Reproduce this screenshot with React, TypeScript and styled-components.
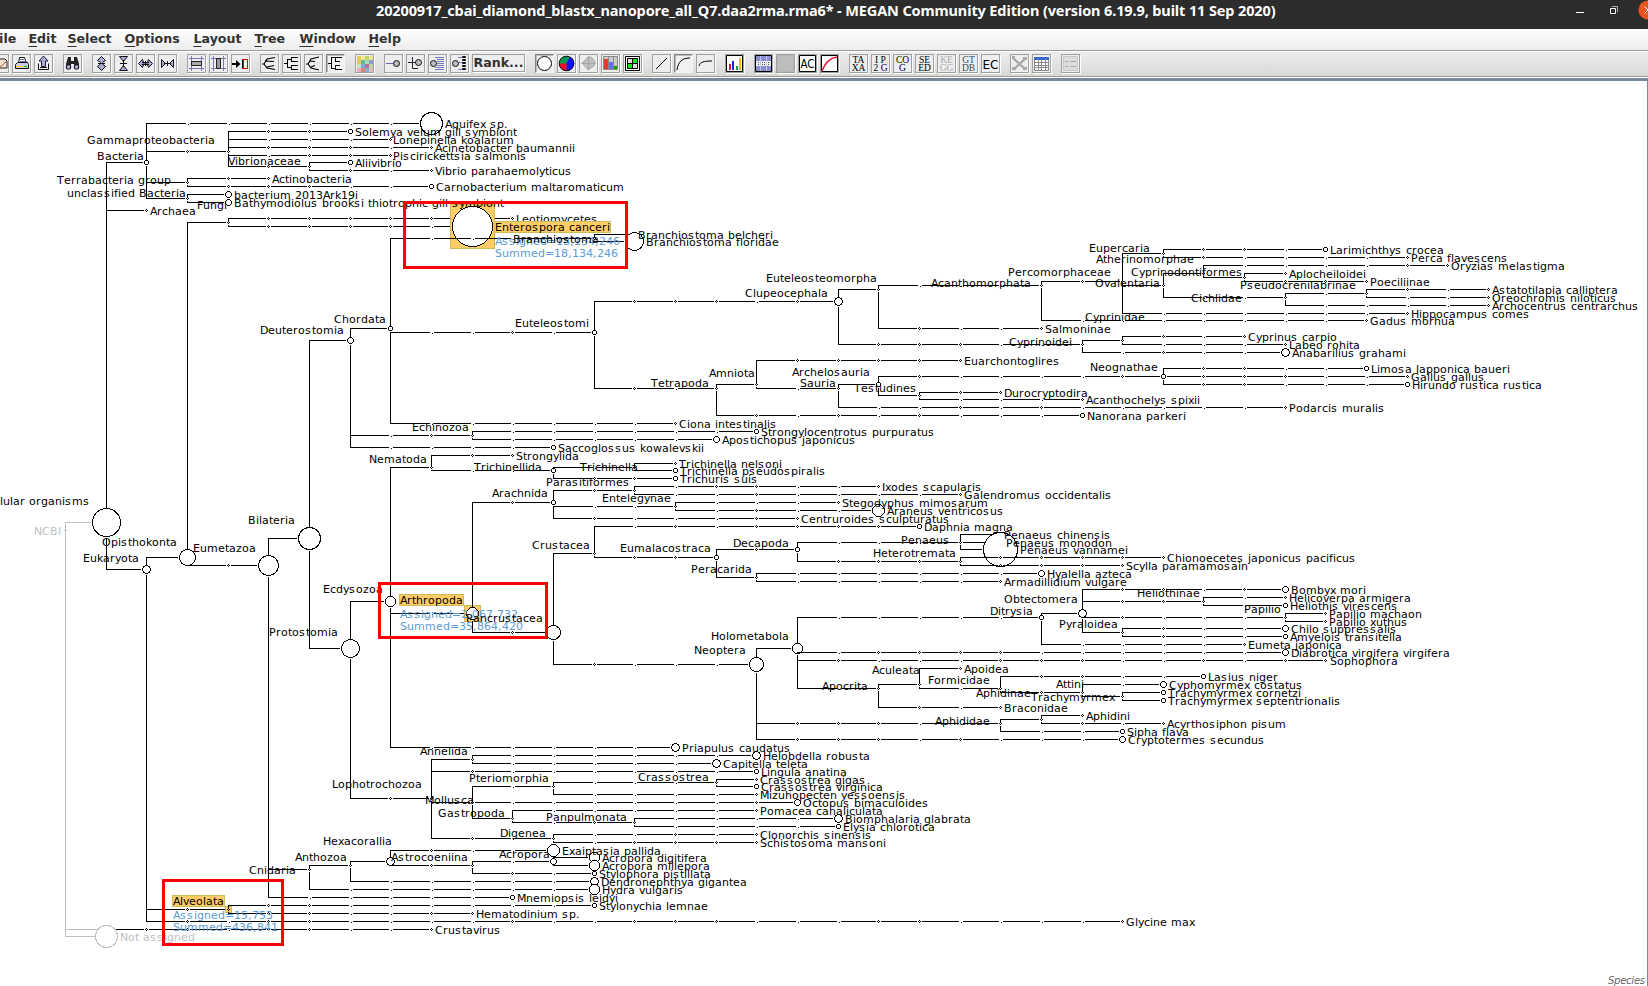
import React from "react";
import styled, { createGlobalStyle, css } from "styled-components";

const Global = createGlobalStyle`
  html, body, #root { margin: 0; height: 100%; background: #fff; }
  body { overflow: hidden; font-family: "DejaVu Sans", sans-serif; }
`;

const Window = styled.div`
  width: 1648px;
  height: 986px;
  display: flex;
  flex-direction: column;
  overflow: hidden;
  background: #fff;
`;
const TitleBar = styled.header`
  flex: none;
  height: 29px;
  display: flex;
  align-items: flex-start;
  background: #2c2c2c;
  overflow: hidden;
`;
const Title = styled.h1`
  margin: 0 0 0 376px;
  width: 1190px;
  font: 700 14.5px/21px "Noto Sans", sans-serif;
  letter-spacing: -0.12px;
  color: #fff;
  white-space: nowrap;
`;
const WindowControls = styled.svg`
  flex: none;
  display: block;
`;
const MenuBar = styled.nav`
  flex: none;
  height: 21px;
  display: flex;
  align-items: flex-start;
  gap: 13px;
  background: linear-gradient(#fff, #ececec);
  border-bottom: 1px solid #9a9a9a;
`;
const MenuItem = styled.span<{ $w: number; $shift?: number }>`
  flex: none;
  width: ${(p) => p.$w}px;
  margin-left: ${(p) => p.$shift ?? 0}px;
  font: 700 12.6px/19px "DejaVu Sans", sans-serif;
  color: #333;
  white-space: nowrap;
  u { text-underline-offset: 3px; text-decoration-thickness: 1px; text-decoration-skip-ink: none; }
`;
const ToolBar = styled.div`
  flex: none;
  box-sizing: border-box;
  height: 26px;
  display: flex;
  align-items: flex-start;
  gap: 10px;
  padding: 2px 0 0;
  border-top: 1px solid #fff;
  border-bottom: 1px solid #9a9a9a;
  background: linear-gradient(#ededed, #d8d8d8);
`;
const Group = styled.div<{ $first?: boolean }>`
  display: flex;
  gap: 3px;
  margin-left: ${(p) => (p.$first ? -10 : 0)}px;
`;
const ToolButton = styled.button<{ $wide?: boolean; $on?: boolean }>`
  flex: none;
  box-sizing: border-box;
  width: ${(p) => (p.$wide ? 53 : 19)}px;
  height: ${(p) => (p.$wide ? 18 : 19)}px;
  margin: 0;
  padding: 0;
  display: flex;
  align-items: center;
  justify-content: center;
  border: 1px solid #a0a0a0;
  background: #eee;
  box-shadow: 1px 1px 0 #fff;
  color: #333;
  font: 700 12.6px/16px "DejaVu Sans", sans-serif;
  svg { font-weight: 400; }
  ${(p) =>
    p.$on &&
    css`
      border-color: #808080 #f4f4f4 #f4f4f4 #808080;
      box-shadow: inset 1px 1px 0 #bbb;
      background: #f1f1f1;
    `}
`;
const Divider = styled.div`
  flex: none;
  height: 3px;
  border-top: 1px solid #fff;
  background: #778899;
`;
const Canvas = styled.main`
  flex: 1;
  min-height: 0;
  border-right: 1px solid #7a8aa8;
  background: #fff;
`;
const Drawing = styled.svg`
  display: block;
  font-family: "DejaVu Sans", sans-serif;
  font-size: 11px;
`;

/* ---------- toolbar icons ---------- */

const lav = "#a9a9dc";
const icons: Record<string, React.ReactNode> = {
  open: (
    <>
      <path d="M9 4H14L16 6V13H9" fill="#fbe3cd" stroke="#222" />
      <path d="M9 12L15 7" stroke="#a55" />
    </>
  ),
  print: (
    <>
      <path d="M5.500 8.500L6.500 2.500H11.500L13.500 8.500" fill="#fff" stroke="#111" />
      <path d="M2.500 9.500L4.500 7.500H14.500L15.500 9.500V13.500H2.500Z" fill="#c9c9e8" stroke="#111" />
      <path d="M7 4.500H11M7 6.500H12" stroke="#66a" />
      <path d="M3 11.500H12" stroke="#ffd800" />
      <path d="M11 11.500H14" stroke="#0b0" />
    </>
  ),
  export: (
    <>
      <path d="M3.500 8.500V14.500H13.500V8.500M5 12.500H12" fill="none" stroke="#111" />
      <path d="M8.500 1L13 6H10.500V11.500H6.500V6H4Z" fill={lav} stroke="#223" />
    </>
  ),
  find: (
    <>
      <path d="M4 2H7V6H10V2H13L15 9V14H10V9H7V14H2V9Z" fill="#222" />
      <circle cx="4.5" cy="12" r="2.3" fill={lav} stroke="#111" />
      <circle cx="12.5" cy="12" r="2.3" fill={lav} stroke="#111" />
    </>
  ),
  expandV: (
    <>
      <path d="M4.500 5.500L8.500 1.500L12.500 5.500L8.500 8L12.500 11.500L8.500 15.500L4.500 11.500L8.500 8Z" fill={lav} stroke="#111" />
      <path d="M8.500 4V13" stroke={lav} strokeWidth="2" />
      <path d="M5 8.500H12" stroke="#111" />
    </>
  ),
  contractV: (
    <>
      <path d="M4.500 1.500H12.500L8.500 6.500ZM4.500 15.500H12.500L8.500 10.500Z" fill={lav} stroke="#111" />
      <path d="M5 8.500H12M8.500 5V12" stroke="#111" />
    </>
  ),
  expandH: (
    <>
      <path d="M5.500 4.500L1.500 8.500L5.500 12.500L7 8.500ZM11.500 4.500L15.500 8.500L11.500 12.500L10 8.500Z" fill={lav} stroke="#111" />
      <path d="M5 7.500H12M5 9.500H12M8.500 6V11" stroke="#111" />
    </>
  ),
  contractH: (
    <>
      <path d="M2.500 4.500V12.500L6.500 8.500ZM14.500 4.500V12.500L10.500 8.500Z" fill={lav} stroke="#111" />
      <path d="M8.500 6V11M5 8.500H12" stroke="#111" />
    </>
  ),
  fitV: (
    <>
      <path d="M3.5 1V16M13.5 1V16M1 3.500H16M1 13.500H16" stroke="#77b" />
      <path d="M3.500 6.500H13.500V10.500H3.500Z" fill="#aaa" stroke="#222" />
    </>
  ),
  fitH: (
    <>
      <path d="M3.5 1V16M13.5 1V16M1 3.500H16M1 13.500H16" stroke="#77b" />
      <path d="M6.500 3.500H10.500V13.500H6.500Z" fill="#999" stroke="#222" />
    </>
  ),
  goTo: (
    <>
      <path d="M0 9H5" stroke="#000" strokeWidth="2" />
      <path d="M4 5L8.500 9L4 13Z" fill="#000" />
      <path d="M10.500 4.500H15.500V13.500H10.500Z" fill="#eee" stroke="#000" />
      <path d="M11.500 5V13M10 4.500H16M10 13.500H16M15.500 4V14" stroke="#d00" />
    </>
  ),
  tree1: <path d="M1 9H3L6 4L14 2.500M4 6L13 6.500M3 9L6 13L14 14.500M6 12L13 10.500" fill="none" stroke="#000" strokeWidth="1.200" />,
  tree2: <path d="M1 8.500H4M4.500 4V13M4 4.500H8M8.500 2V7M8 2.500H15M8 6.500H15M4 12.500H8M8.500 10V15M8 14.500H15M8 10.500H15" fill="none" stroke="#000" />,
  tree3: <path d="M1 9H3L6 4L14 2M5 6L10 6.500M3 9L6 13L14 15M6 12L10 10.500" fill="none" stroke="#000" strokeWidth="1.200" />,
  tree4: <path d="M1 8.500H4M4.500 2V14M4 2.500H15M8.500 2V7M8 6.500H13M4 13.500H8M8.500 10V15M8 14.500H15M8 10.500H13" fill="none" stroke="#000" />,
  palette: (
    <g shapeRendering="crispEdges">
      {[
        ["#e8c870", "#f4e88c", "#b8d870", "#f4e48c"],
        ["#e8c468", "#60bc98", "#a8d8b0", "#8ca0d0"],
        ["#c8e0b8", "#70b0d8", "#c06890", "#b8d4a0"],
        ["#eab0b8", "#e88070", "#70b8d0", "#e8b8c0"],
      ].map((row, y) => row.map((c, x) => <rect key={`${x}-${y}`} x={x * 4 + 1} y={y * 4 + 1} width="4" height="4" fill={c} />))}
    </g>
  ),
  node1: (
    <>
      <path d="M1 8.500H9" stroke="#66b" />
      <circle cx="11.500" cy="8.500" r="3" fill="#bbb" stroke="#111" />
    </>
  ),
  node2: (
    <>
      <path d="M1 7.500H9M5.500 2V13.500H11" fill="none" stroke="#223" />
      <circle cx="11.500" cy="7.500" r="3" fill="#bbb" stroke="#111" />
    </>
  ),
  node3: (
    <>
      <path d="M6 2.500H15M8 4.500H15M8 6.500H15M8 8.500H15M8 10.500H15M6 12.500H15M6 14.500H15" stroke="#77b" />
      <circle cx="4.500" cy="8.500" r="3" fill="#bbb" stroke="#111" />
    </>
  ),
  node4: (
    <>
      <path d="M7 2.500H11M7 14.500H11M8 7.500H11" stroke="#77b" />
      <path d="M13 1V16" stroke="#111" strokeWidth="3.500" strokeDasharray="2 1" />
      <circle cx="4.500" cy="8.500" r="3" fill="#bbb" stroke="#111" />
    </>
  ),
  circle: <circle cx="8.500" cy="8.500" r="7" fill="#fff" stroke="#000" />,
  pie: (
    <>
      <circle cx="8.500" cy="8.500" r="7.500" fill="#0a9a50" />
      <path d="M8.500 8.500L12 1.800A7.500 7.500 0 0 1 8.500 16Z" fill="#1010ff" />
      <path d="M8.500 8.500V16A7.500 7.500 0 0 1 1 8.500Z" fill="#f00828" />
      <circle cx="8.500" cy="8.500" r="7.300" fill="none" stroke="#111" />
    </>
  ),
  pieOff: (
    <>
      <path d="M8 2A6 6 0 0 1 15 8L14 11L8 15L2 8Z" fill="#bfbfbf" stroke="#aaa" />
      <path d="M1 8.500H16M8.500 1V15" stroke="#a8a8a8" />
    </>
  ),
  heat: (
    <>
      <path d="M1.500 1.500H15.500V14.500H1.500Z" fill="#ccc" stroke="#888" />
      <path d="M2 4H6V14H2Z" fill="#e8382c" />
      <path d="M7 7H11V14H7Z" fill="#6c6cf0" />
      <path d="M12 11H15V14H12Z" fill="#0a0" />
      <path d="M6.500 1V15M11.500 1V15" stroke="#888" />
    </>
  ),
  grid: (
    <>
      <path d="M1.500 1.500H15.500V15.500H1.500Z" fill="#fff" stroke="#000" />
      <path d="M3.500 3.500H13.500V13.500H3.500Z" fill="#ddd" stroke="#000" />
      <path d="M9 4H13V8H9ZM4 9H8V13H4Z" fill="#0e0" />
      <path d="M8.500 4V13M4 8.500H13" stroke="#000" />
    </>
  ),
  line: <path d="M3 14L14 3" stroke="#000" />,
  arc: <path d="M2 15C3 7 7 3 15 3" fill="none" stroke="#000" />,
  arc2: <path d="M2 11C3 7 7 6 15 6" fill="none" stroke="#000" />,
  bars: (
    <>
      <path d="M.5.5H16.500V16.500H.5Z" fill="#fff" stroke="#000" />
      <path d="M3 9H5V15H3Z" fill="#f01030" />
      <path d="M6 6H8V15H6Z" fill="#2020f0" />
      <path d="M10 11H12V15H10Z" fill="#0a9a50" />
      <path d="M13 3H15V15H13Z" fill="#f5b800" />
    </>
  ),
  align: (
    <>
      <path d="M.5.5H16.500V16.500H.5Z" fill="#8c8cd0" stroke="#000" />
      <path d="M1 6H16V11H1Z" fill="#eee" />
      <path d="M5.500 1V16M11.500 1V16" stroke="#c4c4e8" />
      <path d="M3.500 7V10M7.500 7V10M9.500 7V10M13.500 7V10" stroke="#555" strokeDasharray="1 1" />
    </>
  ),
  alignOff: <path d="M.5.5H16.500V16.500H.5Z" fill="#bdbdbd" stroke="#b5b5b5" />,
  ac: (
    <>
      <path d="M.5.5H16.500V16.500H.5Z" fill="#fff" stroke="#000" />
      <text x="8.500" y="13" fontSize="11.500" textAnchor="middle" textLength="14" lengthAdjust="spacingAndGlyphs">AC</text>
    </>
  ),
  curve: (
    <>
      <path d="M.5.5H16.500V16.500H.5Z" fill="#fff" stroke="#000" />
      <path d="M1 16C4 8 8 3 16 2" fill="none" stroke="#f01030" strokeWidth="1.500" />
    </>
  ),
  ec: <text x="8.500" y="13.500" fontSize="13" textAnchor="middle" textLength="16" lengthAdjust="spacingAndGlyphs">EC</text>,
  net: (
    <>
      <path d="M2 3L14 14M14 4L3 14" stroke="#a0a0a0" strokeWidth="2" />
      <path d="M1 1H4V4H1ZM12 2H16V5H12ZM1 12H5V15H1ZM12 12H16V15H12ZM7 7H10V10H7Z" fill="#aaa" />
    </>
  ),
  table: (
    <>
      <path d="M1.500 2.500H15.500V15.500H1.500Z" fill="#fff" stroke="#888" />
      <path d="M1 2H16V5H1Z" fill="#3a68c8" />
      <path d="M1 7.500H16M1 10.500H16M1 12.500H16M5.500 5V15M8.500 5V15M12.500 5V15" stroke="#888" />
    </>
  ),
  list: (
    <>
      <path d="M1.500 1.500H15.500V15.500H1.500Z" fill="#ddd" stroke="#c8c8c8" />
      <path d="M3 6.500H6M8 6.500H14M3 11.500H6M8 11.500H14" stroke="#aaa" />
    </>
  ),
};

const stacked = (a: string, b: string, color = "#000") => (
  <g fill={color} fontFamily="Liberation Serif, serif" fontSize="9.500" textAnchor="middle">
    <text x="8.500" y="8">{a}</text>
    <text x="8.500" y="15.500">{b}</text>
  </g>
);
Object.assign(icons, {
  taxa: stacked("TA", "XA"),
  ip2g: stacked("I P", "2 G"),
  cog: stacked("CO", "G"),
  seed: stacked("SE", "ED"),
  kegg: stacked("KE", "GG", "#aaa"),
  gtdb: stacked("GT", "DB", "#444"),
});

const toolGroups: string[][] = [
  ["open", "print", "export"],
  ["find"],
  ["expandV", "contractV", "expandH", "contractH"],
  ["fitV", "fitH", "goTo"],
  ["tree1", "tree2", "tree3", "tree4*"],
  ["palette"],
  ["node1", "node2", "node3", "node4", "Rank..."],
  ["circle*", "pie", "pieOff", "heat", "grid"],
  ["line", "arc*", "arc2"],
  ["bars"],
  ["align", "alignOff", "ac", "curve"],
  ["taxa", "ip2g", "cog", "seed", "kegg", "gtdb", "ec"],
  ["net", "table"],
  ["list"],
];

/* ---------- taxonomy tree ---------- */

/** One taxon. `marks` lists the unlabelled ranks between the parent and this node. */
interface Taxon {
  marks: string;
  y: number;
  r: number;
  label: string;
  at?: [number, number];
  kids: Taxon[];
  selected?: boolean;
}
const leaf = (marks: string, y: number, label: string, r = 1, at?: [number, number]): Taxon => ({ marks, y, r, label, at, kids: [] });
const clade = (marks: string, y: number, r: number, label: string, at: [number, number], ...kids: Taxon[]): Taxon => ({ marks, y, r, label, at, kids });

const bacteria = clade("", 162, 2, "Bacteria", [97, 160],
  leaf("......", 123, "Aquifex sp.", 11),
  clade("o", 151, 1, "Gammaproteobacteria", [87, 144],
    leaf("oo", 131, "Solemya velum gill symbiont", 2),
    leaf("...", 139, "Lonepinella koalarum", 1, [393, 144]),
    leaf("ooo.", 147, "Acinetobacter baumannii"),
    leaf(".oo", 155, "Piscirickettsia salmonis", 1, [393, 160]),
    clade("o", 166, 1, "Vibrionaceae", [228, 165],
      leaf("", 162, "Aliivibrio", 2),
      leaf("o.", 170, "Vibrio parahaemolyticus"))),
  clade("", 182, 1, "Terrabacteria group", [57, 184],
    leaf("o", 178, "Actinobacteria"),
    leaf("ooo..", 186, "Carnobacterium maltaromaticum", 2)),
  clade("", 198, 1, "unclassified Bacteria", [67, 197],
    leaf("", 194, "bacterium 2013Ark19i", 3),
    leaf("", 202, "Bathymodiolus brooksi thiotrophic gill symbiont", 3)));

const fungi = clade("", 222, 1, "Fungi", [197, 209],
  leaf("ooooo.", 218, "Leotiomycetes"),
  { ...leaf("oooo.", 226, "Enterospora canceri", 20, [495, 231]), selected: true });

const fish = clade("ooo.o", 301, 4, "Clupeocephala", [745, 297],
  clade("", 289, 1, "Euteleosteomorpha", [766, 282],
    clade("...", 285, 1, "Acanthomorphata", [931, 287],
      clade("o", 281, 1, "Percomorphaceae", [1008, 276],
        clade("", 253, 1, "Eupercaria", [1089, 252],
          leaf("oo.", 249, "Larimichthys crocea", 2),
          leaf("o....", 257, "Perca flavescens")),
        clade("", 285, 1, "Ovalentaria", [1095, 287],
          clade("", 273, 1, "Atherinomorphae", [1096, 263],
            leaf("....o", 265, "Oryzias melastigma"),
            clade("", 277, 1, "Cyprinodontiformes", [1131, 276],
              leaf("", 273, "Aplocheiloidei"),
              leaf("oo", 281, "Poeciliinae"))),
          clade("..", 297, 1, "Cichlidae", [1191, 302],
            clade(".", 293, 1, "Pseudocrenilabrinae", [1240, 289],
              leaf("o.", 289, "Astatotilapia calliptera"),
              leaf("..", 297, "Oreochromis niloticus")),
            leaf("....", 305, "Archocentrus centrarchus"))),
        leaf("......", 313, "Hippocampus comes")),
      leaf(".......", 320, "Gadus morhua")),
    leaf("o..", 328, "Salmoninae")),
  clade("ooo..", 344, 1, "Cyprinoidei", [1009, 346],
    clade("", 340, 1, "Cyprinidae", [1085, 321],
      leaf("o.", 336, "Cyprinus carpio"),
      leaf("...", 344, "Labeo rohita")),
    leaf(".o..", 352, "Anabarilius grahami", 4)));

const tetrapoda = clade("o.", 388, 1, "Tetrapoda", [651, 387],
  clade("", 384, 1, "Amniota", [709, 377],
    leaf("oooo", 360, "Euarchontoglires"),
    clade(".", 388, 1, "Sauria", [800, 387],
      clade("", 384, 2, "Archelosauria", [792, 376],
        clade("o....o", 376, 2, "Neognathae", [1090, 371],
          leaf("oo..", 368, "Limosa lapponica baueri", 2),
          leaf("ooo..", 376, "Gallus gallus"),
          leaf("oo...", 384, "Hirundo rustica rustica", 2)),
        clade("", 395, 1, "Testudines", [854, 392],
          leaf("o", 392, "Durocryptodira"),
          leaf("...", 399, "Acanthochelys spixii"))),
      leaf("..o.o.....", 407, "Podarcis muralis"))),
  leaf("o.o.o...", 415, "Nanorana parkeri", 2));

const deuterostomia = clade("", 340, 3, "Deuterostomia", [260, 334],
  clade("", 328, 2, "Chordata", [334, 323],
    clade("....", 238, 1, "Branchiostoma", [513, 243],
      leaf("", 234, "Branchiostoma belcheri", 2, [638, 239]),
      leaf("", 241, "Branchiostoma floridae", 9)),
    clade("..o.", 332, 2, "Euteleostomi", [515, 327], fish, tetrapoda),
    leaf("......", 423, "Ciona intestinalis")),
  clade(".o", 435, 1, "Echinozoa", [412, 431],
    leaf("......", 431, "Strongylocentrotus purpuratus", 2),
    leaf(".....", 439, "Apostichopus japonicus", 3)),
  leaf("....", 447, "Saccoglossus kowalevskii", 2));

const crustacea = clade("", 553, 1, "Crustacea", [532, 549],
  leaf(".o.oooo", 526, "Daphnia magna", 2),
  clade("oo", 557, 2, "Eumalacostraca", [620, 552],
    clade("o", 549, 2, "Decapoda", [733, 547],
      clade("...", 542, 1, "Penaeus", [901, 544],
        leaf("", 534, "Penaeus chinensis", 2, [1004, 539]),
        leaf("", 542, "Penaeus monodon", 3, [1006, 547]),
        leaf("", 549, "Penaeus vannamei", 17)),
      clade("ooo", 561, 1, "Heterotremata", [873, 557],
        leaf("oooo", 557, "Chionoecetes japonicus pacificus"),
        leaf("ooo", 565, "Scylla paramamosain"))),
    clade("", 577, 1, "Peracarida", [691, 573],
      leaf("......", 573, "Hyalella azteca", 3),
      leaf(".....", 581, "Armadillidium vulgare"))));

const ditrysia = clade(".....", 617, 2, "Ditrysia", [990, 615],
  clade("", 613, 4, "Obtectomera", [1004, 603],
    leaf("oo.o", 589, "Bombyx mori", 3),
    clade("oo", 601, 1, "Heliothinae", [1137, 597],
      leaf(".", 597, "Helicoverpa armigera"),
      leaf(".", 605, "Heliothis virescens", 2)),
    clade("o...", 617, 1, "Papilio", [1244, 613],
      leaf("", 613, "Papilio machaon"),
      leaf("", 621, "Papilio xuthus")),
    clade("", 632, 1, "Pyraloidea", [1059, 628],
      leaf("o..", 628, "Chilo suppressalis", 3),
      leaf("o..", 636, "Amyelois transitella", 2))),
  leaf("....", 644, "Eumeta japonica"));

const neoptera = clade("o...", 664, 7, "Neoptera", [694, 654],
  clade("", 648, 5, "Holometabola", [711, 640],
    ditrysia,
    leaf(".oooo......", 652, "Diabrotica virgifera virgifera", 3),
    leaf("o...ooo..o.o", 660, "Sophophora", 1, [1330, 665]),
    clade(".", 688, 1, "Apocrita", [822, 690],
      clade("", 684, 1, "Aculeata", [872, 674],
        leaf("", 668, "Apoidea"),
        clade(".", 688, 1, "Formicidae", [928, 684],
          leaf("oo..", 676, "Lasius niger", 2),
          clade("o", 692, 1, "Attini", [1056, 688],
            leaf(".", 684, "Cyphomyrmex costatus", 3),
            clade("", 696, 1, "Trachymyrmex", [1031, 701],
              leaf("", 692, "Trachymyrmex cornetzi", 2),
              leaf("", 700, "Trachymyrmex septentrionalis", 2))))),
      leaf("o.", 707, "Braconidae"))),
  clade("ooo..", 723, 1, "Aphididae", [935, 725],
    clade("", 719, 1, "Aphidinae", [976, 697],
      leaf("", 715, "Aphidini"),
      leaf("o.", 723, "Acyrthosiphon pisum")),
    leaf("..", 731, "Sipha flava", 2)),
  leaf("ooo.o...", 739, "Cryptotermes secundus", 3));

const arthropoda: Taxon = {
  ...clade(".", 613, 6, "Arthropoda", [400, 604],
    clade("o", 502, 2, "Arachnida", [492, 497],
      clade("o", 490, 1, "Parasitiformes", [546, 486],
        leaf(".oo..", 486, "Ixodes scapularis"),
        leaf("..o....", 494, "Galendromus occidentalis")),
      clade("..", 506, 1, "Entelegynae", [602, 502],
        leaf("...", 502, "Stegodyphus mimosarum"),
        leaf(".o..", 510, "Araneus ventricosus", 6)),
      leaf("o...o", 518, "Centruroides sculpturatus")),
    clade("o", 632, 7, "Pancrustacea", [466, 622], crustacea, neoptera)),
  selected: true,
};

const protostomia = clade("", 648, 9, "Protostomia", [269, 636],
  clade("", 601, 5, "Ecdysozoa", [323, 593],
    clade("", 467, 1, "Nematoda", [369, 463],
      leaf("o", 455, "Strongylida"),
      clade("..", 470, 2, "Trichinellida", [474, 471],
        clade(".", 467, 1, "Trichinella", [580, 471],
          leaf("", 463, "Trichinella nelsoni"),
          leaf("", 470, "Trichinella pseudospiralis", 2)),
        leaf("oo", 478, "Trichuris suis", 2))),
    arthropoda,
    leaf("......", 747, "Priapulus caudatus", 4)),
  clade("o", 798, 1, "Lophotrochozoa", [332, 788],
    clade("", 759, 1, "Annelida", [420, 755],
      leaf("......", 755, "Helobdella robusta", 4),
      leaf(".....", 763, "Capitella teleta", 4)),
    leaf("o......", 771, "Lingula anatina", 2),
    clade("", 802, 1, "Mollusca", [425, 804],
      clade(".", 786, 1, "Pteriomorphia", [469, 782],
        clade("...", 782, 1, "Crassostrea", [638, 781],
          leaf("", 779, "Crassostrea gigas"),
          leaf("", 786, "Crassostrea virginica", 2)),
        leaf("....", 794, "Mizuhopecten yessoensis")),
      leaf("......o", 802, "Octopus bimaculoides", 3),
      clade("", 818, 1, "Gastropoda", [438, 817],
        leaf(".....", 810, "Pomacea canaliculata"),
        clade(".o", 822, 1, "Panpulmonata", [546, 821],
          leaf("....", 818, "Biomphalaria glabrata", 4),
          leaf("....", 826, "Elysia chlorotica", 2)))),
    clade("o.", 838, 1, "Digenea", [500, 837],
      leaf("..o.", 834, "Clonorchis sinensis"),
      leaf(".ooo", 842, "Schistosoma mansoni"))));

const cnidaria = clade("", 869, 1, "Cnidaria", [249, 874],
  clade("", 865, 1, "Anthozoa", [295, 861],
    clade("", 861, 4, "Hexacorallia", [323, 845],
      leaf("o..", 850, "Exaiptasia pallida", 6),
      clade("o", 865, 1, "Astrocoeniina", [391, 861],
        clade(".", 861, 3, "Acropora", [499, 858],
          leaf("", 857, "Acropora digitifera", 5),
          leaf("", 865, "Acropora millepora", 5)),
        leaf("o.", 873, "Stylophora pistillata", 2))),
    leaf(".....", 881, "Dendronephthya gigantea", 4)),
  leaf("......", 889, "Hydra vulgaris", 5));

const root = clade("", 522, 14, "cellular organisms", [-16, 505],
  bacteria,
  leaf("", 210, "Archaea"),
  clade("", 569, 4, "Eukaryota", [83, 562],
    clade("", 557, 8, "Opisthokonta", [102, 546],
      fungi,
      clade("o", 565, 10, "Eumetazoa", [193, 552],
        clade("", 538, 11, "Bilateria", [248, 524], deuterostomia, protostomia),
        cnidaria,
        leaf(".....", 897, "Mnemiopsis leidyi", 2))),
    {
      ...clade("o", 909, 1, "Alveolata", [173, 905],
        leaf("oo......", 905, "Stylonychia lemnae", 2),
        leaf("oo..o", 913, "Hematodinium sp.")),
      selected: true,
    },
    leaf("o.oo....o..ooo...oo....", 921, "Glycine max")));

const columnX = (col: number) => Math.floor(65.5 + 40.66 * col);

/* Whole-pixel advance widths of the label font at 11px. */
const advances: Record<string, number> = {};
const widths: [string, number][] = [
  ["ilIj", 3], ["tf .,", 4], ["r", 5], ["ckzFLvxy", 6], ["abdeghnopqsuAVEPST0123456789", 7],
  ["BCDHNRU", 8], ["GOM=w", 9], ["m", 11],
];
widths.forEach(([chars, w]) => [...chars].forEach((c) => (advances[c] = w)));
const advance = (c: string) => advances[c] ?? 7;

function Label({ x, y, text, color = "#000" }: { x: number; y: number; text: string; color?: string }) {
  let pen = x;
  const xs = [...text].map((c) => {
    const at = pen;
    pen += advance(c);
    return at;
  });
  return <text x={xs.join(" ")} y={y} fill={color}>{text}</text>;
}

/** Pixel-stepped circle outline, used for the small nodes. */
function ring(cx: number, cy: number, r: number) {
  const dots = new Set<string>();
  for (let x = 0; x <= r; x++) {
    const y = Math.round(Math.sqrt(r * r - x * x));
    if (x > y) break;
    for (const sx of [-1, 1]) {
      for (const sy of [-1, 1]) {
        dots.add(`M${cx + sx * x} ${cy + sy * y + 0.5}h1`);
        dots.add(`M${cx + sx * y} ${cy + sy * x + 0.5}h1`);
      }
    }
  }
  return [...dots].join("");
}

const yellow = { fill: "#ffcc66", stroke: "#cdb955" };

function drawTree(parent: Taxon, col: number, shapes: React.ReactNode[], labels: React.ReactNode[]) {
  const px = columnX(col);
  const gap = (r: number) => r + 1;
  parent.kids.forEach((kid) => {
    const kidCol = col + kid.marks.length + 1;
    const kx = columnX(kidCol);
    const dy = kid.y - parent.y;
    const clear = gap(parent.r);
    let d = "";
    if (Math.abs(dy) > clear) d += `M${px + 0.5} ${parent.y + 0.5 + Math.sign(dy) * clear}V${kid.y + (dy < 0 ? 0 : 1)}`;
    let from = dy === 0 ? px + clear + 1 : px;
    [...kid.marks].forEach((mark, i) => {
      const mx = columnX(col + i + 1);
      d += `M${from} ${kid.y + 0.5}H${mx - (mark === "o" ? 2 : 1)}`;
      d += mark === "o" ? `M${mx - 1} ${kid.y + 0.5}h1m1 0h1M${mx} ${kid.y - 0.5}h1m-1 2h1` : `M${mx + 1} ${kid.y + 1.5}h1`;
      from = mx + 3;
    });
    d += `M${from} ${kid.y + 0.5}H${kx - gap(kid.r)}`;
    const key = `${kidCol}-${kid.y}`;
    shapes.push(<path key={key} d={d} fill="none" stroke="#000" />);
    if (kid.selected) {
      const h = kid.r + 2;
      shapes.push(<rect key={key + "s"} x={kx + 0.5 - h} y={kid.y + 0.5 - h} width={h * 2} height={h * 2} {...yellow} />);
    }
    if (kid.r <= 1) {
      shapes.push(<path key={key + "n"} d={`M${kx - 1} ${kid.y + 0.5}h1m1 0h1M${kx} ${kid.y - 0.5}h1m-1 2h1`} stroke="#000" />);
    } else if (kid.r <= 6) {
      shapes.push(
        <g key={key + "n"}>
          <circle cx={kx + 0.5} cy={kid.y + 0.5} r={kid.r} fill="#fff" />
          <path d={ring(kx, kid.y, kid.r)} stroke="#000" />
        </g>,
      );
    } else {
      shapes.push(<circle key={key + "n"} cx={kx + 0.5} cy={kid.y + 0.5} r={kid.r} fill="#fff" stroke="#000" />);
    }
    const [lx, ly] = kid.at ?? [kx + kid.r + 3, kid.y + 5];
    if (kid.selected) {
      const w = [...kid.label].reduce((sum, c) => sum + advance(c), 0);
      labels.push(<rect key={key + "h"} x={lx - 0.5} y={ly - 9.5} width={w + 1} height="11" shapeRendering="crispEdges" {...yellow} />);
    }
    labels.push(<Label key={key + "l"} x={lx} y={ly} text={kid.label} />);
    drawTree(kid, kidCol, shapes, labels);
  });
}

function TaxonomyTree() {
  const shapes: React.ReactNode[] = [];
  const labels: React.ReactNode[] = [];
  drawTree(root, 1, shapes, labels);
  const blue = "#5b9bd5";
  const grey = "#c0c0c0";
  return (
    <Drawing width="1647" height="905" viewBox="0 81 1647 905">
      <g shapeRendering="crispEdges">
        <path d="M65.500 522.500V936.500M65 522.500H91M65 929.500H97M65 936.500H95" fill="none" stroke={grey} />
        <path d="M64 530.500h1m1 0h1M65 529.500h1m-1 2h1" stroke={grey} />
        <path d="M116 929.500H144M149 929.500H185M190 929.500H227M231 929.500H266M271 929.500H307M312 929.500H349M353 929.500H389M393 929.500H429" stroke="#000" />
        <path d="M145 929.500h1m1 0h1M146 928.500h1m-1 2h1M186 929.500h1m1 0h1M187 928.500h1m-1 2h1M308 929.500h1m1 0h1M309 928.500h1m-1 2h1M430 929.500h1m1 0h1M431 928.500h1m-1 2h1M351 930.500h1M391 930.500h1M229 930.500h1M267 929.500h1m1 0h1" stroke="#000" />
        <circle cx="106.500" cy="936.500" r="11" fill="#fff" stroke={grey} />
        <circle cx="106.500" cy="522.500" r="14" fill="#fff" stroke="#000" />
        {shapes}
      </g>
      <Label x={root.at![0]} y={root.at![1]} text={root.label} />
      <Label x={34} y={535} text="NCBI" color={grey} />
      <Label x={120} y={941} text="Not assigned" color={grey} />
      <Label x={435} y={934} text="Crustavirus" />
      <Label x={495} y={245} text="Assigned=18,134,246" color={blue} />
      <Label x={495} y={257} text="Summed=18,134,246" color={blue} />
      <Label x={400} y={618} text="Assigned=2,067,732" color={blue} />
      <Label x={400} y={630} text="Summed=35,864,420" color={blue} />
      <Label x={173} y={919} text="Assigned=15,753" color={blue} />
      <Label x={173} y={931} text="Summed=436,841" color={blue} />
      {labels}
      <g fill="none" stroke="#f00" strokeWidth="3" shapeRendering="crispEdges">
        <rect x="404.500" y="202.500" width="222" height="65" />
        <rect x="379.500" y="583.500" width="167" height="54" />
        <rect x="163.500" y="880.500" width="119" height="64" />
      </g>
      <text x="1608" y="984" fill="#666" fontStyle="italic" fontSize="10" textLength="37">Species</text>
    </Drawing>
  );
}

const menus: [string, string, number][] = [
  ["E", "dit", 26], ["S", "elect", 44], ["O", "ptions", 56], ["L", "ayout", 48],
  ["T", "ree", 32], ["W", "indow", 56], ["H", "elp", 32],
];

export default function App() {
  return (
    <Window>
      <Global />
      <TitleBar>
        <Title>20200917_cbai_diamond_blastx_nanopore_all_Q7.daa2rma.rma6* - MEGAN Community Edition (version 6.19.9, built 11 Sep 2020)</Title>
        <WindowControls width="82" height="29" viewBox="1566 0 82 29">
          <path d="M1576 12.500H1584" stroke="#fff" />
          <path d="M1610.500 8.500H1615.500V13.500H1610.500Z" fill="none" stroke="#fff" />
          <path d="M1612 6.500H1617.500V12" fill="none" stroke="#aaa" />
          <circle cx="1648" cy="10" r="9.500" fill="#e95420" />
          <path d="M1644.500 6.500L1651.500 13.500M1644.500 13.500L1651.500 6.500" stroke="#fff" />
        </WindowControls>
      </TitleBar>
      <MenuBar>
        <MenuItem $w={25} $shift={-9.5}><u>F</u>ile</MenuItem>
        {menus.map(([key, rest, w]) => (
          <MenuItem key={rest} $w={w}><u>{key}</u>{rest}</MenuItem>
        ))}
      </MenuBar>
      <ToolBar>
        {toolGroups.map((group, g) => (
          <Group key={g} $first={g === 0}>
            {group.map((name) => {
              const id = name.replace("*", "");
              return (
                <ToolButton key={name} $wide={!icons[id]} $on={name.endsWith("*")}>
                  {icons[id] ? <svg width="17" height="17" viewBox="0 0 17 17">{icons[id]}</svg> : name}
                </ToolButton>
              );
            })}
          </Group>
        ))}
      </ToolBar>
      <Divider />
      <Canvas>
        <TaxonomyTree />
      </Canvas>
    </Window>
  );
}
